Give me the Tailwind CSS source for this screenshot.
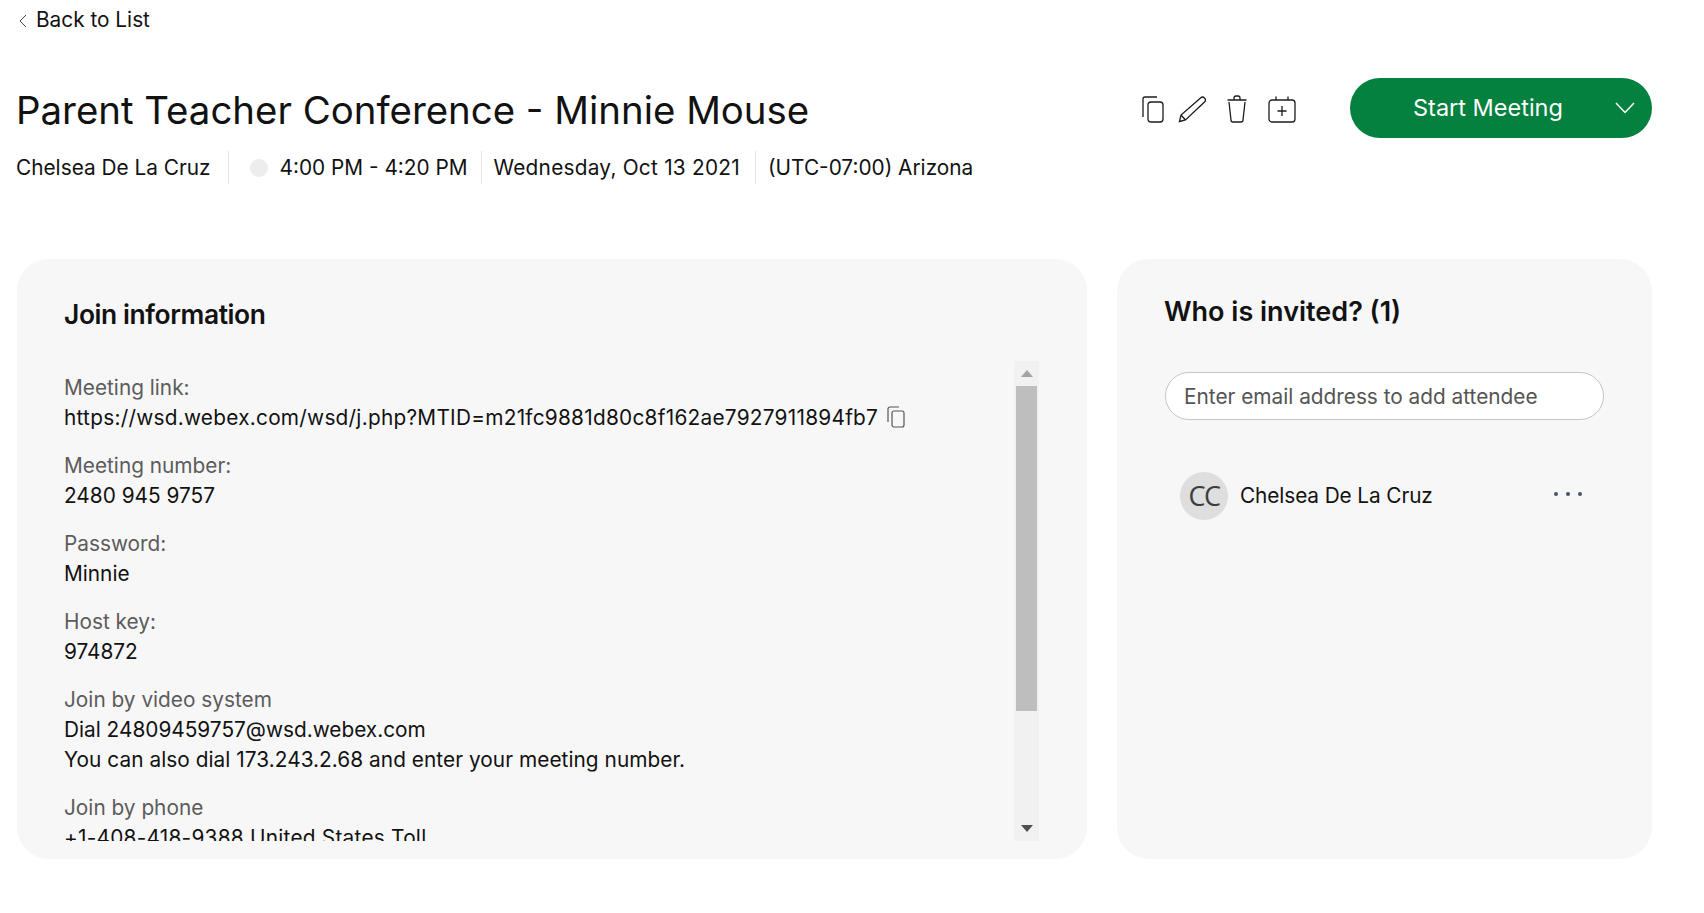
<!DOCTYPE html>
<html lang="en">
<head>
  <meta charset="UTF-8" />
  <title>Meeting details</title>
  <script src="https://cdn.jsdelivr.net/npm/@tailwindcss/browser@4"></script>
</head>
<body class="bg-white font-['Inter',sans-serif] text-[#121212] h-[913px] overflow-hidden">
  <div class="pl-4 pr-[52px]">
    <!-- Back link -->
    <div class="h-[38px] flex items-center text-[20.8px] pt-[1px]">
      <svg class="ml-[3px] mt-[2px] mr-[9px]" width="8" height="14" viewBox="0 0 8 14" fill="none" stroke="#444" stroke-width="1"><path d="M7 1 L1 7 L7 13"/></svg>
      <span>Back to List</span>
    </div>

    <!-- Header -->
    <div class="flex justify-between items-start mt-10">
      <div>
        <h1 class="text-[38.4px] leading-[50px] mt-[7px]">Parent Teacher Conference - Minnie Mouse</h1>
        <div class="flex items-center h-[33px] mt-[16px] text-[20.8px]">
          <span class="pr-[17px] border-r border-[#e3e3e3] h-full flex items-center">Chelsea De La Cruz</span>
          <span class="w-[18px] h-[18px] rounded-full bg-[#ededed] ml-[21px] mr-[12px]"></span>
          <span class="pr-[13px] border-r border-[#e3e3e3] h-full flex items-center">4:00 PM - 4:20 PM</span>
          <span class="pl-[12px] pr-[15px] border-r border-[#e3e3e3] h-full flex items-center tracking-[0.25px]">Wednesday, Oct 13 2021</span>
          <span class="pl-[12px]">(UTC-07:00) Arizona</span>
        </div>
      </div>
      <div class="flex items-center">
        <div class="flex items-center mr-[54px] mt-[2px]">
          <svg width="22" height="27" viewBox="0 0 22 27" fill="none" stroke="#1c1c1c" stroke-width="1.3"><path d="M15 1 H3 a2 2 0 0 0 -2 2 V21"/><rect x="6" y="6" width="15" height="20" rx="3"/></svg>
          <svg class="ml-[14px]" width="28" height="27" viewBox="0 0 28 27" fill="none" stroke="#1c1c1c" stroke-width="1.3"><path d="M1.5 25.5 L3 19 L22.5 2 a2.6 2.6 0 0 1 4 4 L7.5 24 Z M3 19 L7.5 24"/></svg>
          <svg class="ml-[21px]" width="20" height="28" viewBox="0 0 20 28" fill="none" stroke="#1c1c1c" stroke-width="1.3"><path d="M0.5 5 H19.5 M7 5 V3 a2 2 0 0 1 2 -2 h2 a2 2 0 0 1 2 2 V5 M2 7 L4 25 a2 2 0 0 0 2 2 H14 a2 2 0 0 0 2 -2 L18 7"/></svg>
          <svg class="ml-[21px]" width="28" height="27" viewBox="0 0 28 27" fill="none" stroke="#1c1c1c" stroke-width="1.3"><rect x="1" y="4" width="26" height="22" rx="3"/><path d="M8 0.5 V4 M20 0.5 V4 M14 10 V20 M9.5 15 H18.5"/></svg>
        </div>
        <button class="w-[302px] h-[60px] rounded-full bg-[#04803f] text-white text-[23.5px] flex items-center">
          <span class="ml-[63px]">Start Meeting</span>
          <svg class="ml-[52px]" width="20" height="12" viewBox="0 0 20 12" fill="none" stroke="white" stroke-width="1.5"><path d="M1 1 L10 10.5 L19 1"/></svg>
        </button>
      </div>
    </div>

    <!-- Cards -->
    <div class="flex gap-[30px] mt-[75px] h-[600px] ml-[1px]">
      <div class="w-[1070px] bg-[#f7f7f7] rounded-[32px] pl-[47px] pr-[48px] pt-[39px] flex flex-col">
        <h2 class="text-[26.4px] leading-[32px] font-semibold tracking-[-0.4px] text-[#121212]">Join information</h2>
        <div class="flex mt-[31px] h-[480px]">
          <div class="flex-1 overflow-hidden text-[20.8px] leading-[30px] pt-[12px]">
            <div class="text-[#5c5c5c]">Meeting link:</div>
            <div class="flex items-center"><span class="tracking-[0.26px]">https://wsd.webex.com/wsd/j.php?MTID=m21fc9881d80c8f162ae7927911894fb7</span>
              <svg class="ml-[9px] mb-[2px]" width="18" height="22" viewBox="0 0 18 22" fill="none" stroke="#555" stroke-width="1.2"><path d="M12 1 H3 a2 2 0 0 0 -2 2 V16"/><rect x="5" y="5" width="12" height="16" rx="2"/></svg>
            </div>
            <div class="text-[#5c5c5c] mt-[18px]">Meeting number:</div>
            <div>2480 945 9757</div>
            <div class="text-[#5c5c5c] mt-[18px]">Password:</div>
            <div>Minnie</div>
            <div class="text-[#5c5c5c] mt-[18px]">Host key:</div>
            <div>974872</div>
            <div class="text-[#5c5c5c] mt-[18px]">Join by video system</div>
            <div>Dial 24809459757@wsd.webex.com</div>
            <div class="tracking-[0.05px]">You can also dial 173.243.2.68 and enter your meeting number.</div>
            <div class="text-[#5c5c5c] mt-[18px]">Join by phone</div>
            <div class="tracking-[0.25px]">+1-408-418-9388 United States Toll</div>
          </div>
          <!-- scrollbar -->
          <div class="w-[25px] bg-[#f1f1f1] flex flex-col items-center shrink-0">
            <div class="h-[25px] flex items-center justify-center">
              <svg width="12" height="7" viewBox="0 0 12 7"><path d="M6 0 L12 7 H0 Z" fill="#a3a3a3"/></svg>
            </div>
            <div class="w-[21px] h-[325px] bg-[#bebebe]"></div>
            <div class="flex-1 flex items-end pb-[9px]">
              <svg width="12" height="7" viewBox="0 0 12 7"><path d="M0 0 H12 L6 7 Z" fill="#505050"/></svg>
            </div>
          </div>
        </div>
      </div>

      <div class="flex-1 bg-[#f7f7f7] rounded-[32px] pl-[47px] pr-[48px] pt-[37px]">
        <h2 class="text-[27px] leading-[32px] font-semibold">Who is invited? (1)</h2>
        <div class="ml-[1px] mt-[44px] h-[48px] rounded-full border border-[#c6c6c6] bg-white flex items-center pl-[18px] pt-[1px] text-[20.8px] text-[#545454]">Enter email address to add attendee</div>
        <div class="flex items-center mt-[52px] pl-[16px]">
          <div class="w-[48px] h-[48px] rounded-full bg-[#dedede] flex items-center justify-center text-[27px] font-medium text-[#3d3d3d] tracking-[-1.5px] font-['Open_Sans',sans-serif]">CC</div>
          <span class="ml-[12px] text-[20.8px] tracking-[-0.1px]">Chelsea De La Cruz</span>
          <div class="flex gap-[8px] ml-auto mr-[22px] mb-[4px]">
            <span class="w-[4px] h-[4px] rounded-full bg-[#44546a]"></span>
            <span class="w-[4px] h-[4px] rounded-full bg-[#44546a]"></span>
            <span class="w-[4px] h-[4px] rounded-full bg-[#44546a]"></span>
          </div>
        </div>
      </div>
    </div>
  </div>
</body>
</html>
